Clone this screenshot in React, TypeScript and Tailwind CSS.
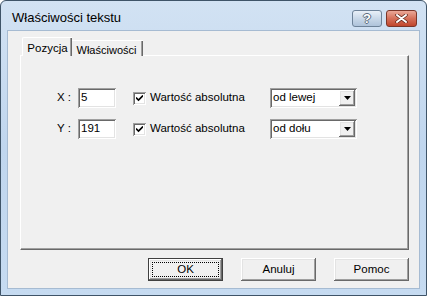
import React from 'react';

const raised =
  'shadow-[inset_-1px_-1px_0_#696969,inset_1px_1px_0_#ffffff,inset_-2px_-2px_0_#a0a0a0,inset_2px_2px_0_#e3e3e3]';
const sunken =
  'shadow-[inset_1px_1px_0_#a0a0a0,inset_-1px_-1px_0_#ffffff,inset_2px_2px_0_#696969,inset_-2px_-2px_0_#e3e3e3]';

function Field({ value }: { value: string }) {
  return (
    <div className={`w-[38px] h-[20px] bg-white ${sunken} pl-[3px] flex items-center text-[11.5px] text-black`}>
      {value}
    </div>
  );
}

function Check() {
  return (
    <div className={`w-[13px] h-[13px] bg-white ${sunken} flex items-center justify-center`}>
      <svg width="7" height="7" viewBox="0 0 7 7">
        <path d="M0 2.5 L2.5 5 L7 0.5" stroke="#000" strokeWidth="1.6" fill="none" />
      </svg>
    </div>
  );
}

function Combo({ value }: { value: string }) {
  return (
    <div className={`w-[87px] h-[20px] bg-white ${sunken} flex items-center pl-[3px] pr-[2px]`}>
      <span className="flex-1 text-[11.5px] text-black">{value}</span>
      <div className={`w-[16px] h-[16px] bg-[#f0f0f0] ${raised} flex items-center justify-center`}>
        <svg width="7" height="4" viewBox="0 0 7 4">
          <path d="M0 0 H7 L3.5 4 Z" fill="#000" />
        </svg>
      </div>
    </div>
  );
}

function Row({ axis, value, anchor }: { axis: string; value: string; anchor: string }) {
  return (
    <div className="flex items-center h-[20px]">
      <span className="w-[21px] text-[11.5px] text-black">{axis} :</span>
      <Field value={value} />
      <div className="ml-[17px] mr-[4px]">
        <Check />
      </div>
      <span className="w-[120px] text-[11.5px] text-black">Wartość absolutna</span>
      <Combo value={anchor} />
    </div>
  );
}

function DialogButton({ label, isDefault }: { label: string; isDefault?: boolean }) {
  if (isDefault) {
    return (
      <div className="w-[75px] h-[23px] border border-[#404040] bg-[#f0f0f0]">
        <div className={`w-full h-full ${raised} flex items-center justify-center p-[3px]`}>
          <div className="w-full h-full border border-dotted border-black flex items-center justify-center text-[11.5px] text-black">
            {label}
          </div>
        </div>
      </div>
    );
  }
  return (
    <div className={`w-[75px] h-[23px] bg-[#f0f0f0] ${raised} flex items-center justify-center text-[11.5px] text-black`}>
      {label}
    </div>
  );
}

export default function App() {
  return (
    <div className="w-[427px] h-[296px] bg-white font-['Liberation_Sans',Arial,sans-serif]">
      <div className="w-full h-full flex flex-col rounded-t-[6px] border border-[#3f5468] bg-gradient-to-b from-[#d2e2f3] via-[#c0d6ee] to-[#c6dbf1]">
        <div className="h-[29px] flex items-start pt-[8px] pl-[11px] pr-[9px]">
          <span className="flex-1 text-[13px] leading-[18px] text-black">Właściwości tekstu</span>
          <div className="flex gap-[4px] pt-[1px]">
            <div className="w-[30px] h-[17px] rounded-[3px] border border-[#6d8298] bg-gradient-to-b from-[#e9f0f8] via-[#c9d8e8] to-[#aec3da] flex items-center justify-center">
              <span className="text-[13px] font-bold leading-none text-white [text-shadow:1px_0_0_#5b6b7c,-1px_0_0_#5b6b7c,0_1px_0_#5b6b7c,0_-1px_0_#5b6b7c]">?</span>
            </div>
            <div className="w-[31px] h-[17px] rounded-[3px] border border-[#7b3629] bg-gradient-to-b from-[#eaa898] via-[#d5705a] to-[#c0462c] flex items-center justify-center">
              <svg width="13" height="9" viewBox="0 0 13 9">
                <path d="M2 1 L11 8 M11 1 L2 8" stroke="#5a2318" strokeWidth="3.4" strokeLinecap="round" />
                <path d="M2 1 L11 8 M11 1 L2 8" stroke="#ffffff" strokeWidth="2" strokeLinecap="round" />
              </svg>
            </div>
          </div>
        </div>

        <div className="flex-1 mx-[6px] mb-[6px] border border-[#a6bbd2] bg-[#f0f0f0] flex flex-col pt-[6px] pl-[12px] pr-[10px]">
          <div className="flex items-end h-[19px] pl-[2px] relative z-10 -mb-px">
            <div className="h-[19px] w-[50px] bg-[#f0f0f0] border-t border-l border-white rounded-tl-[2px] shadow-[inset_-1px_0_0_#696969,inset_-2px_0_0_#a0a0a0] flex items-start justify-center pt-[2px] text-[11.5px] text-black">
              Pozycja
            </div>
            <div className="h-[16px] w-[71px] bg-[#f0f0f0] border-t border-white shadow-[inset_-1px_0_0_#696969,inset_-2px_0_0_#a0a0a0] flex items-start justify-center pt-[1px] pr-[2px] text-[11px] text-black">
              Właściwości
            </div>
          </div>
          <div className="h-[195px] border-t border-l border-white border-b border-r border-b-[#696969] border-r-[#696969] shadow-[inset_-1px_-1px_0_#a0a0a0] pt-[32px] pl-[36px] flex flex-col gap-[11px]">
            <Row axis="X" value="5" anchor="od lewej" />
            <Row axis="Y" value="191" anchor="od dołu" />
          </div>
          <div className="mt-[8px] flex justify-end gap-[18px]">
            <DialogButton label="OK" isDefault />
            <DialogButton label="Anuluj" />
            <DialogButton label="Pomoc" />
          </div>
        </div>
      </div>
    </div>
  );
}
